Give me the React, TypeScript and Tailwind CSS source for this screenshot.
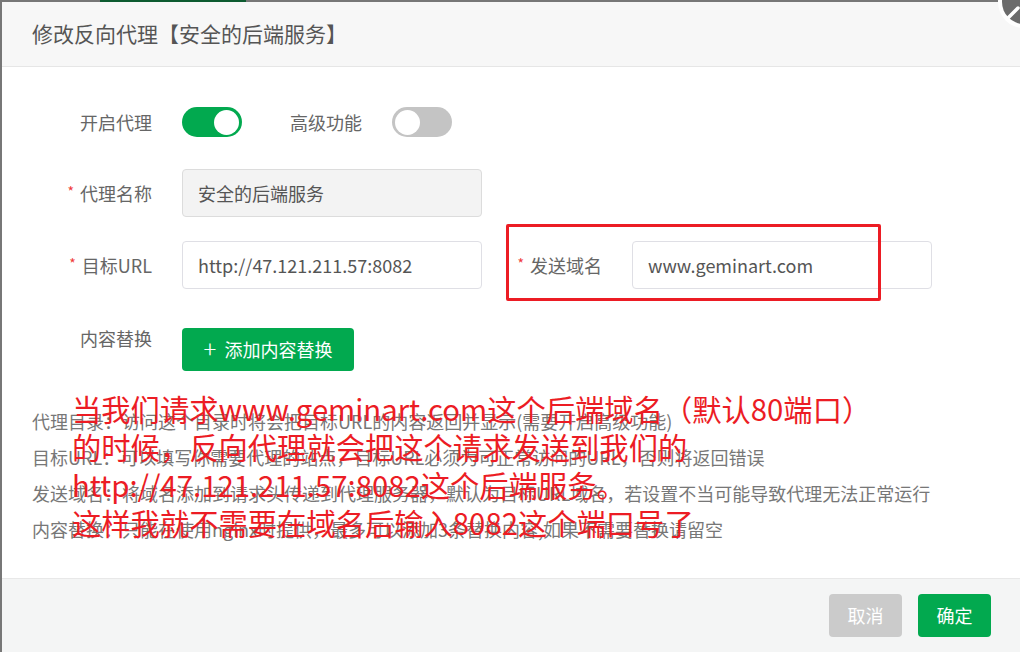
import React from "react";

const font = { fontFamily: '"Noto Sans CJK SC", "Noto Sans", sans-serif' };

function Label({ text, required, className = "" }: { text: string; required?: boolean; className?: string }) {
  return (
    <div className={`w-[120px] shrink-0 flex justify-end items-center text-[18px] text-[#666] ${className}`}>
      {required && <span className="text-[#f03a3a] text-[14px] mr-[6px] -mt-[4px]">*</span>}
      {text}
    </div>
  );
}

function Switch({ on }: { on: boolean }) {
  return (
    <div
      className={`w-[60px] h-[30px] rounded-full flex items-center px-[3px] ${
        on ? "bg-[#02a94f] justify-end" : "bg-[#c4c4c4] justify-start"
      }`}
    >
      <div className="w-[25px] h-[25px] rounded-full bg-white" />
    </div>
  );
}

function Field({ value, disabled }: { value: string; disabled?: boolean }) {
  return (
    <div
      className={`w-[300px] h-[48px] rounded-[4px] border flex items-center px-[15px] text-[18px] text-[#555] ${
        disabled ? "bg-[#f3f3f3] border-[#dcdcdc]" : "bg-white border-[#dfdfe5]"
      }`}
    >
      {value}
    </div>
  );
}

export default function App() {
  return (
    <div className="relative w-[1020px] h-[652px] overflow-hidden bg-[#777]" style={font}>
      {/* page behind the overlay */}
      <div className="absolute left-[100px] top-0 w-[146px] h-[3px] bg-[#0d5b30]" />

      <div className="absolute left-[2px] top-[2px] w-[1040px] h-[680px] bg-white rounded-tl-[4px] flex flex-col">
        {/* header */}
        <div className="h-[65px] shrink-0 bg-[#f7f7f7] border-b border-[#e6e6e6] flex items-center pl-[30px] text-[21px] text-[#555]">
          修改反向代理【安全的后端服务】
        </div>

        {/* body */}
        <div className="relative flex-1 pl-[30px] pt-[31px]">
          <div className="flex items-center h-[48px]">
            <Label text="开启代理" />
            <div className="ml-[30px]">
              <Switch on />
            </div>
            <Label text="高级功能" />
            <div className="ml-[30px]">
              <Switch on={false} />
            </div>
          </div>

          <div className="flex items-center mt-[23px]">
            <Label text="代理名称" required />
            <div className="ml-[30px]">
              <Field value="安全的后端服务" disabled />
            </div>
          </div>

          <div className="flex items-center mt-[24px]">
            <Label text="目标URL" required />
            <div className="ml-[30px]">
              <Field value="http://47.121.211.57:8082" />
            </div>
            <Label text="发送域名" required />
            <div className="ml-[30px]">
              <Field value="www.geminart.com" />
            </div>
          </div>

          <div className="flex items-start mt-[39px]">
            <Label text="内容替换" className="h-[20px]" />
            <button className="ml-[30px] h-[43px] w-[172px] rounded-[4px] bg-[#02a94f] text-white text-[18px] flex items-center justify-center gap-[8px]">
              <span className="text-[24px] font-light leading-none -mt-[3px]">+</span>
              添加内容替换
            </button>
          </div>

          <div className="mt-[32px] text-[18px] leading-[36px] text-[#777]">
            <div>代理目录：访问这个目录时将会把目标URL的内容返回并显示(需要开启高级功能)</div>
            <div>目标URL：可以填写你需要代理的站点，目标URL必须为可正常访问的URL，否则将返回错误</div>
            <div>发送域名：将域名添加到请求头传递到代理服务器，默认为目标URL域名，若设置不当可能导致代理无法正常运行</div>
            <div>内容替换：只能在使用nginx时提供，最多可以添加3条替换内容,如果不需要替换请留空</div>
          </div>

          {/* annotation */}
          <div className="absolute left-[504px] top-[157px] w-[375px] h-[77px] border-[3px] border-[#ec1c24] rounded-[2px]" />
          <div className="absolute left-[70px] top-[322px] text-[29.3px] leading-[38px] text-[#ec1c24] whitespace-nowrap">
            <div>当我们请求www.geminart.com这个后端域名（默认80端口）</div>
            <div>的时候，反向代理就会把这个请求发送到我们的</div>
            <div>http://47.121.211.57:8082这个后端服务。</div>
            <div>这样我就不需要在域名后输入8082这个端口号了</div>
          </div>
        </div>

        {/* footer */}
        <div className="h-[104px] shrink-0 bg-[#f4f5f5] border-t border-[#e8e8e8] flex items-start pt-[15px] pl-[827px] gap-[16px]">
          <button className="w-[73px] h-[43px] rounded-[4px] bg-[#cbcbcb] text-white text-[18px]">取消</button>
          <button className="w-[73px] h-[43px] rounded-[4px] bg-[#02a94f] text-white text-[18px]">确定</button>
        </div>
      </div>

      {/* close button */}
      <svg className="absolute left-[996px] top-[-26px]" width="56" height="56" viewBox="0 0 56 56">
        <circle cx="28" cy="28" r="26" fill="#fff" />
        <circle cx="28" cy="28" r="22" fill="#6b6b6b" />
        <line x1="12" y1="44" x2="22" y2="34" stroke="#fff" strokeWidth="3.5" strokeLinecap="round" />
      </svg>
    </div>
  );
}
